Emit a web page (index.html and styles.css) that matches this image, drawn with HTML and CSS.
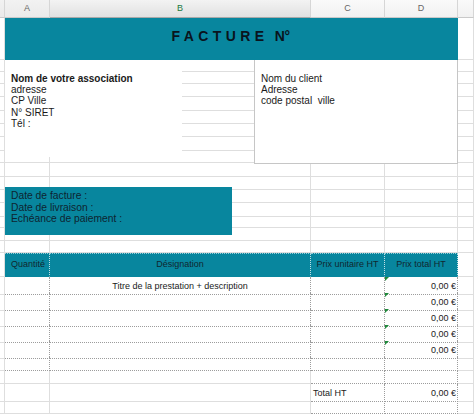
FILE: index.html
```html
<!DOCTYPE html>
<html lang="fr">
<head>
    <meta charset="UTF-8">
    <meta name="viewport" content="width=device-width, initial-scale=1.0">
    <title>Facture</title>
    <link rel="stylesheet" href="styles.css">
</head>
<body>
    <div class="sheet">
        <!-- En-têtes de colonnes -->
        <div class="row col-head">
            <div class="cell"></div>
            <div class="cell">A</div>
            <div class="cell selected">B</div>
            <div class="cell">C</div>
            <div class="cell">D</div>
            <div class="cell"></div>
        </div>

        <!-- Titre -->
        <div class="row band">
            <div class="cell"></div>
            <div class="cell title">FACTURE <span class="tight">N</span>°</div>
            <div class="cell"></div>
        </div>

        <!-- Lignes vides sous les blocs -->
        <div class="row h12"><div class="cell"></div><div class="cell"></div><div class="cell"></div><div class="cell"></div><div class="cell"></div><div class="cell"></div></div>
        <div class="row h12"><div class="cell"></div><div class="cell"></div><div class="cell"></div><div class="cell"></div><div class="cell"></div><div class="cell"></div></div>
        <div class="row h13"><div class="cell"></div><div class="cell"></div><div class="cell"></div><div class="cell"></div><div class="cell"></div><div class="cell"></div></div>
        <div class="row h14"><div class="cell"></div><div class="cell"></div><div class="cell"></div><div class="cell"></div><div class="cell"></div><div class="cell"></div></div>
        <div class="row h13"><div class="cell"></div><div class="cell"></div><div class="cell"></div><div class="cell"></div><div class="cell"></div><div class="cell"></div></div>
        <div class="row h13"><div class="cell"></div><div class="cell"></div><div class="cell"></div><div class="cell"></div><div class="cell"></div><div class="cell"></div></div>
        <div class="row h14"><div class="cell"></div><div class="cell"></div><div class="cell"></div><div class="cell"></div><div class="cell"></div><div class="cell"></div></div>
        <div class="row h12"><div class="cell"></div><div class="cell"></div><div class="cell"></div><div class="cell"></div><div class="cell"></div><div class="cell"></div></div>
        <div class="row h14"><div class="cell"></div><div class="cell"></div><div class="cell"></div><div class="cell"></div><div class="cell"></div><div class="cell"></div></div>
        <div class="row h13"><div class="cell"></div><div class="cell"></div><div class="cell"></div><div class="cell"></div><div class="cell"></div><div class="cell"></div></div>
        <div class="row h13"><div class="cell"></div><div class="cell"></div><div class="cell"></div><div class="cell"></div><div class="cell"></div><div class="cell"></div></div>
        <div class="row h14"><div class="cell"></div><div class="cell"></div><div class="cell"></div><div class="cell"></div><div class="cell"></div><div class="cell"></div></div>
        <div class="row h11"><div class="cell"></div><div class="cell"></div><div class="cell"></div><div class="cell"></div><div class="cell"></div><div class="cell"></div></div>
        <div class="row h13"><div class="cell"></div><div class="cell"></div><div class="cell"></div><div class="cell"></div><div class="cell"></div><div class="cell"></div></div>
        <div class="row h12"><div class="cell"></div><div class="cell"></div><div class="cell"></div><div class="cell"></div><div class="cell"></div><div class="cell"></div></div>

        <!-- En-tête du tableau -->
        <div class="row thead">
            <div class="cell"></div>
            <div class="cell th left">Quantité</div>
            <div class="cell th">Désignation</div>
            <div class="cell th">Prix unitaire HT</div>
            <div class="cell th">Prix total HT</div>
            <div class="cell"></div>
        </div>

        <!-- Lignes du tableau -->
        <div class="row h16">
            <div class="cell"></div>
            <div class="cell td"></div>
            <div class="cell td center">Titre de la prestation + description</div>
            <div class="cell td"></div>
            <div class="cell td amount mark">0,00 €</div>
            <div class="cell"></div>
        </div>
        <div class="row h16">
            <div class="cell"></div>
            <div class="cell td"></div>
            <div class="cell td"></div>
            <div class="cell td"></div>
            <div class="cell td amount mark">0,00 €</div>
            <div class="cell"></div>
        </div>
        <div class="row h16">
            <div class="cell"></div>
            <div class="cell td"></div>
            <div class="cell td"></div>
            <div class="cell td"></div>
            <div class="cell td amount mark">0,00 €</div>
            <div class="cell"></div>
        </div>
        <div class="row h16">
            <div class="cell"></div>
            <div class="cell td"></div>
            <div class="cell td"></div>
            <div class="cell td"></div>
            <div class="cell td amount mark">0,00 €</div>
            <div class="cell"></div>
        </div>
        <div class="row h16">
            <div class="cell"></div>
            <div class="cell td"></div>
            <div class="cell td"></div>
            <div class="cell td"></div>
            <div class="cell td amount mark">0,00 €</div>
            <div class="cell"></div>
        </div>
        <div class="row h14">
            <div class="cell"></div>
            <div class="cell td"></div>
            <div class="cell td"></div>
            <div class="cell td"></div>
            <div class="cell td"></div>
            <div class="cell"></div>
        </div>
        <div class="row h13">
            <div class="cell"></div>
            <div class="cell"></div>
            <div class="cell"></div>
            <div class="cell td"></div>
            <div class="cell td"></div>
            <div class="cell"></div>
        </div>
        <div class="row h15">
            <div class="cell"></div>
            <div class="cell"></div>
            <div class="cell"></div>
            <div class="cell td">Total HT</div>
            <div class="cell td amount">0,00 €</div>
            <div class="cell"></div>
        </div>
        <div class="row h15">
            <div class="cell"></div>
            <div class="cell"></div>
            <div class="cell"></div>
            <div class="cell td"></div>
            <div class="cell td"></div>
            <div class="cell"></div>
        </div>

        <!-- Zones de texte posées sur la feuille -->
        <div class="box assoc">
            <strong>Nom de votre association</strong><br>
            adresse<br>
            CP Ville<br>
            N° SIRET<br>
            Tél :
        </div>

        <div class="box client">
            Nom du client<br>
            Adresse<br>
            code postal&nbsp; ville
        </div>

        <div class="box dates">
            Date de facture :<br>
            Date de livraison :<br>
            Echéance de paiement :
        </div>
    </div>
</body>
</html>
```

FILE: styles.css
```css
body {
    margin: 0;
    padding: 0;
    background-color: #ffffff;
    font-family: "Liberation Sans", Arial, sans-serif;
    color: #1a1a1a;
    overflow: hidden;
}
.sheet {
    position: relative;
    width: 474px;
    height: 414px;
    overflow: hidden;
}
.row {
    display: grid;
    grid-template-columns: 5px 45px 261px 74px 73px 1fr;
}
.cell {
    box-sizing: border-box;
    min-width: 0;
    border-right: 1px solid #dedede;
    border-bottom: 1px solid #dedede;
    position: relative;
    white-space: nowrap;
}
.h11 { height: 11px; }
.h12 { height: 12px; }
.h13 { height: 13px; }
.h14 { height: 14px; }
.h15 { height: 15px; }
.h16 { height: 16px; }

/* En-têtes de colonnes */
.col-head {
    height: 18px;
}
.col-head .cell {
    background: linear-gradient(#fafafa, #f1f1f1);
    border-right-color: #d6d6d6;
    border-bottom-color: #c9c9c9;
    color: #666;
    font-size: 9px;
    line-height: 17px;
    text-align: center;
}
.col-head .cell:first-child,
.col-head .cell:nth-child(2) {
    background: linear-gradient(#f2f2f2, #eaeaea);
}
.col-head .selected {
    background: linear-gradient(#f3f3f3, #e1e1e1);
    color: #217a3c;
    border-bottom-color: #a9a9a9;
}

/* Bandeau du titre */
.band {
    height: 42px;
}
.title {
    grid-column: 2 / 6;
    background-color: #08869e;
    border-right-color: #08869e;
    border-bottom-color: #08869e;
    color: #0a141d;
    font-size: 14px;
    font-weight: bold;
    letter-spacing: 4.4px;
    word-spacing: -2px;
    text-align: center;
    padding-top: 10px;
    padding-left: 4px;
}
.title .tight {
    letter-spacing: -0.3px;
}

/* Tableau */
.thead {
    height: 24px;
}
.th {
    background-color: #08869e;
    border-right: 1px dotted rgba(255, 255, 255, 0.75);
    border-bottom-color: #08869e;
    border-top: 1px dotted rgba(255, 255, 255, 0.6);
    color: #10262f;
    font-size: 9px;
    line-height: 20px;
    text-align: center;
}
.th.left {
    text-align: left;
    padding-left: 6px;
}
.td {
    border-right: 1px dotted #9c9c9c;
    border-bottom: 1px dotted #9c9c9c;
    font-size: 9px;
    line-height: 16px;
    padding: 1px 2px 0;
}
.td.center {
    text-align: center;
}
.td.amount {
    text-align: right;
    padding-right: 1px;
}
.mark::before {
    content: "";
    position: absolute;
    top: 0;
    left: 0;
    border-top: 4px solid #1e8a3a;
    border-right: 4px solid transparent;
}

/* Zones de texte */
.box {
    position: absolute;
    box-sizing: border-box;
    font-size: 10px;
    line-height: 11.2px;
}
.assoc {
    top: 60px;
    left: 5px;
    width: 177px;
    height: 97px;
    background-color: #ffffff;
    padding: 13px 6px 0;
}
.client {
    top: 60px;
    left: 254px;
    width: 204px;
    height: 104px;
    background-color: #ffffff;
    border: 1px solid #c6c6c6;
    border-top: none;
    padding: 13px 6px 0;
}
.dates {
    top: 187px;
    left: 5px;
    width: 227px;
    height: 48px;
    background-color: #08869e;
    color: #0e2430;
    font-size: 10.3px;
    line-height: 11.5px;
    padding: 3px 6px 0;
}
```
